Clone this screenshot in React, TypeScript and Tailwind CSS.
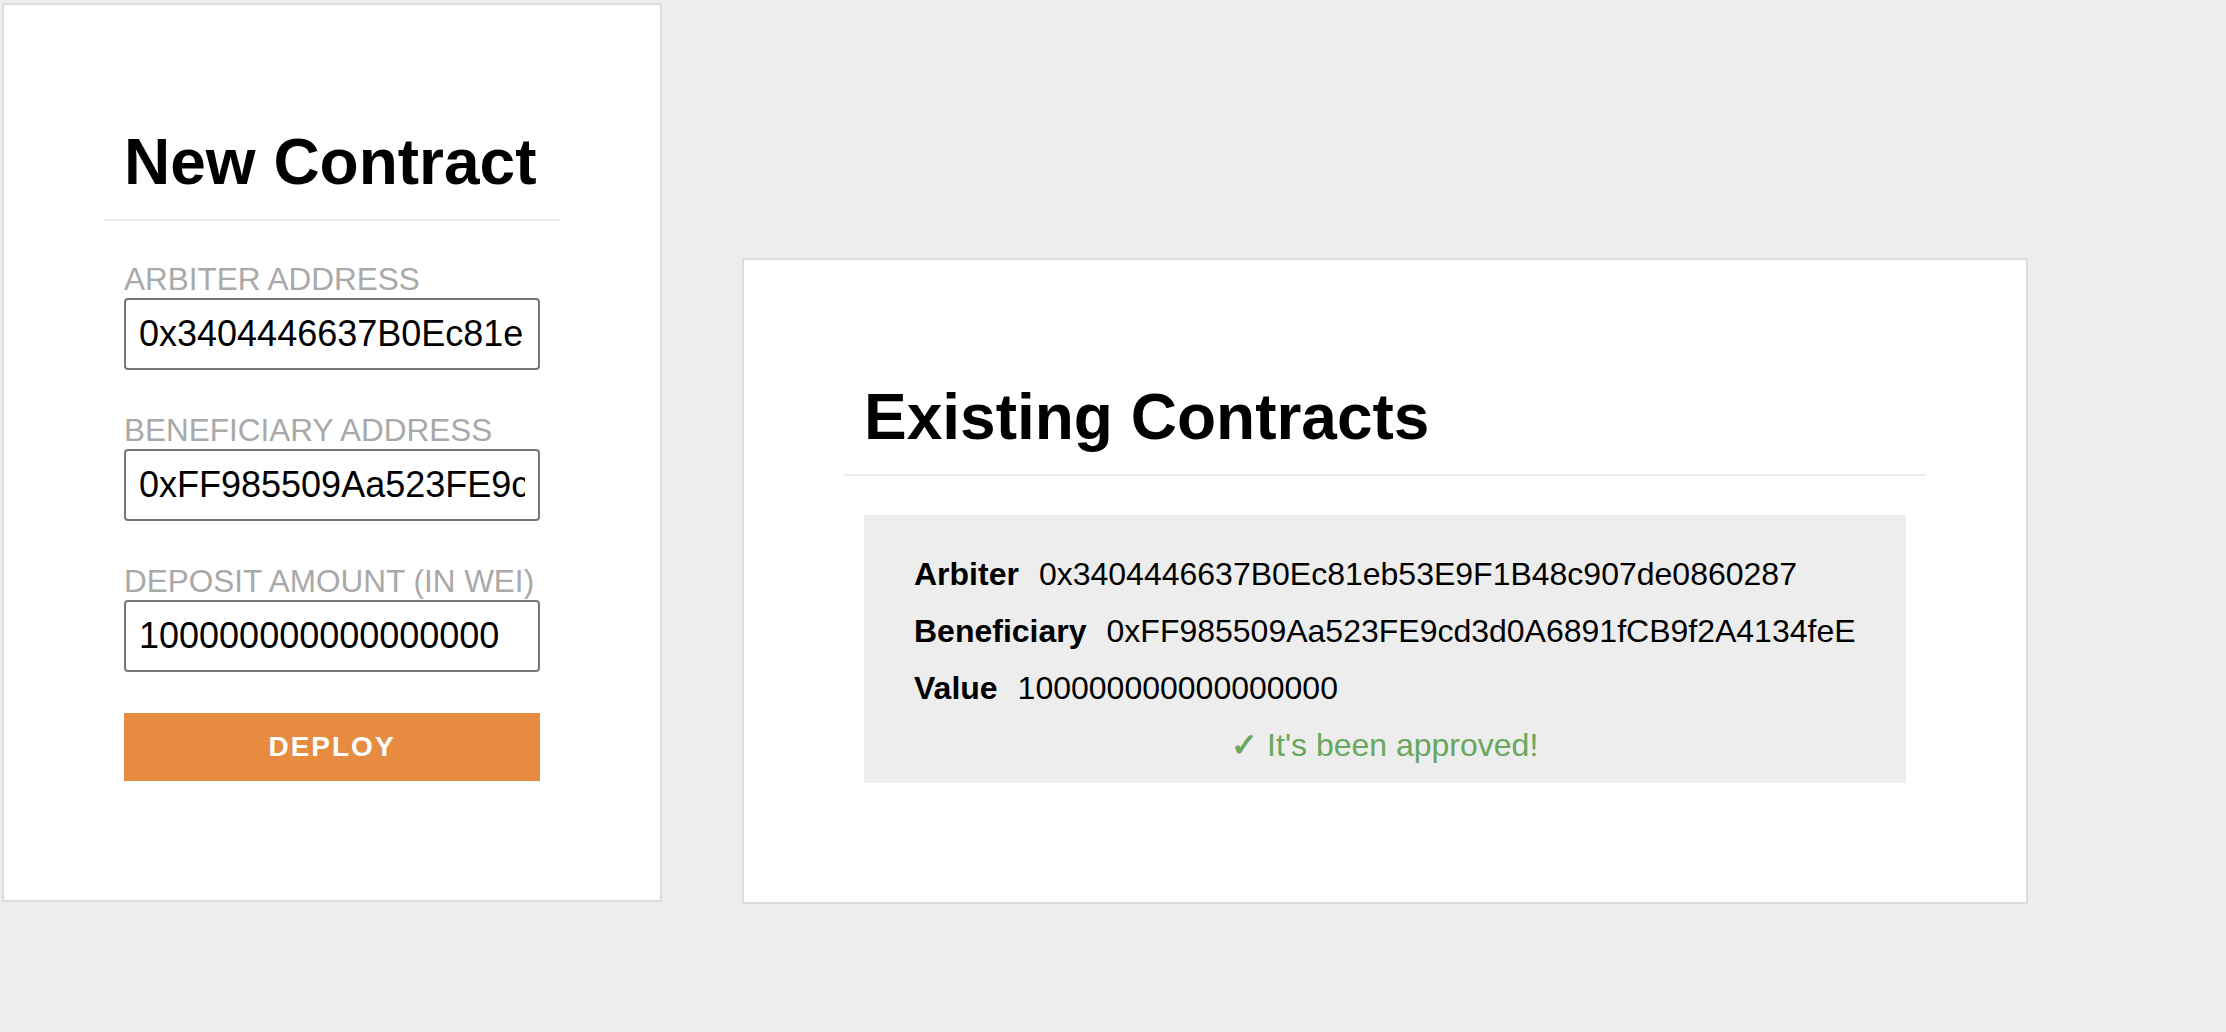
import React from "react";

const fields = [
  { label: "Arbiter Address", value: "0x3404446637B0Ec81eb53E9F1B48c907de0860287" },
  { label: "Beneficiary Address", value: "0xFF985509Aa523FE9cd3d0A6891fCB9f2A4134feE" },
  { label: "Deposit Amount (in Wei)", value: "100000000000000000" },
];

const rows = [
  { label: "Arbiter", value: "0x3404446637B0Ec81eb53E9F1B48c907de0860287" },
  { label: "Beneficiary", value: "0xFF985509Aa523FE9cd3d0A6891fCB9f2A4134feE" },
  { label: "Value", value: "100000000000000000" },
];

export default function App() {
  return (
    <div className="min-h-screen bg-[#ededed] font-['Liberation_Sans',Arial,sans-serif] text-black">
      <div className="flex items-start pl-[2px] pt-[3px]">
        {/* New contract */}
        <div className="w-[660px] shrink-0 border-2 border-[#dcdcdc] bg-white px-[100px] pt-[120px] pb-[119px]">
          <h1 className="border-b-2 border-[#ececec] px-5 pb-5 text-[64px] font-bold leading-[74px]">
            New Contract
          </h1>
          <div className="flex flex-col px-5 pt-[39px]">
            {fields.map((f, i) => (
              <label key={f.label} className={i > 0 ? "mt-[41px] block" : "block"}>
                <span className="block whitespace-nowrap text-[31.5px] uppercase leading-[38px] text-[#a9a9a9]">
                  {f.label}
                </span>
                <input
                  readOnly
                  defaultValue={f.value}
                  className="block h-[72px] w-full rounded-[4px] border-2 border-[#767676] bg-white px-[13px] text-[36px] text-black outline-none"
                />
              </label>
            ))}
            <button className="mt-[41px] h-[68px] w-full bg-[#e68b40] text-[28px] font-bold uppercase tracking-[2px] text-white">
              Deploy
            </button>
          </div>
        </div>

        {/* Existing contracts */}
        <div className="ml-[80px] mt-[255px] border-2 border-[#dcdcdc] bg-white px-[100px] pt-[120px] pb-[119px]">
          <h1 className="border-b-2 border-[#ececec] px-5 pb-5 text-[64px] font-bold leading-[74px]">
            Existing Contracts
          </h1>
          <div className="px-5 pt-[39px]">
            <div className="flex flex-col gap-5 bg-[#ededed] px-[50px] pt-[41px] pb-[19px] text-[32px] leading-[37px]">
              {rows.map((r) => (
                <div key={r.label} className="flex gap-5 whitespace-nowrap">
                  <span className="font-bold">{r.label}</span>
                  <span>{r.value}</span>
                </div>
              ))}
              <div className="text-center text-[#68a75d]">
                <span className="font-bold">✓</span> It's been approved!
              </div>
            </div>
          </div>
        </div>
      </div>
    </div>
  );
}
